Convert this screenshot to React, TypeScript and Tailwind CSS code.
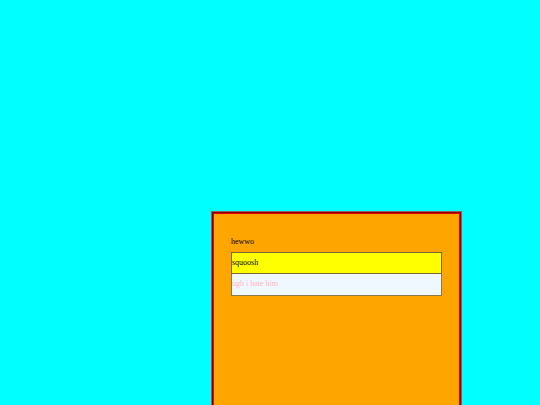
import React from "react";

export default function App() {
  return (
    <div className="w-[540px] h-[405px] bg-[#00ffff] overflow-hidden pl-[211px] pt-[211px]" style={{ fontFamily: '"Liberation Serif", serif' }}>
      <div className="w-[251px] h-[260px] border border-[#8a6060]">
        <div className="h-full border border-[#8b0000]">
          <div className="h-full border border-[#e00000] bg-[#ffa500] pl-[17px] pr-[16px] pt-[23px]">
            <div className="text-[8px] leading-[10px] text-black">hewwo</div>
            <div className="mt-[5px] w-[211px]">
              <input
                readOnly
                value="squoosh"
                className="block w-full h-[22px] border border-[#7a6a30] bg-[#ffff00] text-[8px] text-black px-0 pb-[2px] outline-none"
                style={{ fontFamily: '"Liberation Serif", serif' }}
              />
              <input
                readOnly
                placeholder="ugh i hate him"
                className="block w-full h-[22px] border border-t-0 border-[#8a7a50] bg-[#f0f8ff] text-[8px] px-0 pb-[2px] outline-none placeholder:text-[#ffb6c1]"
                style={{ fontFamily: '"Liberation Serif", serif' }}
              />
            </div>
          </div>
        </div>
      </div>
    </div>
  );
}
